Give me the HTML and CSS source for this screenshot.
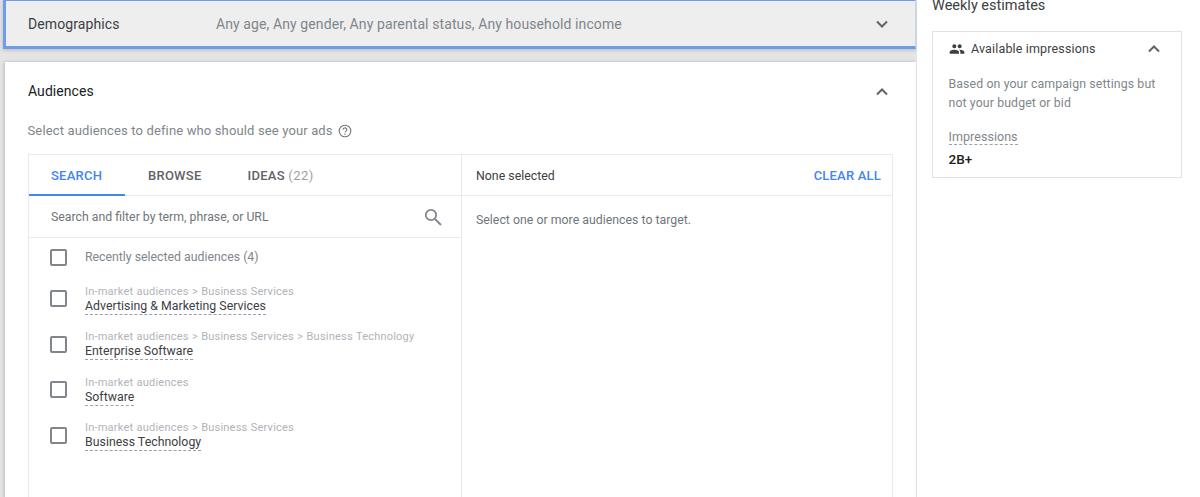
FILE: index.html
```html
<!DOCTYPE html>
<html lang="en">
<head>
<meta charset="utf-8">
<title>Audiences</title>
<link rel="stylesheet" href="styles.css">
</head>
<body>
<div class="page">
  <main class="main">
    <section class="demo">
      <span class="demo-title">Demographics</span>
      <span class="demo-value">Any age, Any gender, Any parental status, Any household income</span>
      <svg class="chev" viewBox="0 0 24 24"><path d="M6 9l6 6 6-6"/></svg>
    </section>
    <section class="card">
      <div class="card-head">
        <h2 class="card-title">Audiences</h2>
        <svg class="chev" viewBox="0 0 24 24"><path d="M6 15l6-6 6 6"/></svg>
      </div>
      <p class="lede">Select audiences to define who should see your ads
        <svg class="help" viewBox="0 0 14 14"><circle cx="7" cy="7" r="5.8"/><path d="M5.2 5.7a1.8 1.8 0 1 1 2.9 1.4c-.7.5-1.1.8-1.1 1.5"/><circle class="dot" cx="7" cy="10.3" r=".7"/></svg>
      </p>
      <div class="picker">
        <div class="col-left">
          <div class="tabs">
            <span class="tab tab-active">SEARCH</span>
            <span class="tab">BROWSE</span>
            <span class="tab">IDEAS <span class="count">(22)</span></span>
          </div>
          <div class="search">
            <span class="search-text">Search and filter by term, phrase, or URL</span>
            <svg class="search-icon" viewBox="0 0 18 18"><circle cx="7" cy="7" r="5.2"/><path d="M11 11l6 6"/></svg>
          </div>
          <ul class="list">
            <li class="row row-single"><span class="check"></span><span class="recent">Recently selected audiences (4)</span></li>
            <li class="row"><span class="check"></span><div class="item"><span class="crumb">In-market audiences &gt; Business Services</span><span class="name">Advertising &amp; Marketing Services</span></div></li>
            <li class="row"><span class="check"></span><div class="item"><span class="crumb">In-market audiences &gt; Business Services &gt; Business Technology</span><span class="name">Enterprise Software</span></div></li>
            <li class="row"><span class="check"></span><div class="item"><span class="crumb">In-market audiences</span><span class="name">Software</span></div></li>
            <li class="row"><span class="check"></span><div class="item"><span class="crumb">In-market audiences &gt; Business Services</span><span class="name">Business Technology</span></div></li>
          </ul>
        </div>
        <div class="col-right">
          <div class="sel-head">
            <span class="none">None selected</span>
            <span class="clear">CLEAR ALL</span>
          </div>
          <p class="hint">Select one or more audiences to target.</p>
        </div>
      </div>
    </section>
  </main>
  <aside class="side">
    <div class="side-title">Weekly estimates</div>
    <div class="est">
      <div class="est-head">
        <svg class="people" viewBox="0 0 24 24"><path d="M16 11c1.66 0 2.99-1.34 2.99-3S17.66 5 16 5s-3 1.34-3 3 1.34 3 3 3zm-8 0c1.66 0 2.99-1.34 2.99-3S9.66 5 8 5 5 6.34 5 8s1.34 3 3 3zm0 2c-2.33 0-7 1.17-7 3.5V19h14v-2.5C15 14.17 10.33 13 8 13zm8 0c-.29 0-.62.02-.97.05 1.16.84 1.97 1.97 1.97 3.45V19h6v-2.5c0-2.33-4.67-3.5-7-3.5z"/></svg>
        <span class="est-title">Available impressions</span>
        <svg class="chev" viewBox="0 0 24 24"><path d="M6 15l6-6 6 6"/></svg>
      </div>
      <p class="est-text">Based on your campaign settings but not your budget or bid</p>
      <span class="est-label">Impressions</span>
      <div class="est-value">2B+</div>
    </div>
  </aside>
</div>
</body>
</html>
```
FILE: styles.css
```css
* { box-sizing: border-box; }
html, body { margin: 0; height: 100%; overflow: hidden; }
body { font-family: Roboto, "Liberation Sans", sans-serif; background: #fff; color: #3c4043; }
.page { display: flex; height: 497px; }
.main { width: 917px; flex: none; background: #e4e4e4; padding-left: 3px; border-right: 1px solid #e4e6e8; }
.demo { height: 50px; margin-top: -1px; background: #eeeeee; border: 2px solid #6d9eeb; border-left-width: 3px; border-bottom-width: 3px; border-right-width: 1px; border-right-color: #c9d6ee; display: flex; align-items: center; padding: 0 23px 0 22px; box-shadow: 0 1px 4px rgba(0,0,0,.2); }
.demo-title { width: 188px; font-size: 14px; letter-spacing: .1px; color: #3c4043; }
.demo-value { flex: 1; font-size: 14px; color: #80868b; letter-spacing: .1px; }
.chev { width: 20px; height: 20px; fill: none; stroke: #5f6368; stroke-width: 2.4; flex: none; }
.card { margin: 13px 0 0 2px; height: 436px; background: #fff; padding: 0 23px 0 22px; box-shadow: -1px 0 3px rgba(0,0,0,.2); }
.card-head { height: 59px; display: flex; align-items: center; justify-content: space-between; padding-left: 1px; }
.card-head .chev { margin-right: 1px; }
.card-title { margin: -1px 0 0; font-size: 14px; font-weight: 400; letter-spacing: .05px; color: #202124; }
.lede { margin: 0; height: 33px; padding: 1px 0 0 .5px; font-size: 13px; color: #80868b; display: flex; align-items: flex-start; gap: 5px; letter-spacing: .14px; line-height: 18px; }
.help { width: 14px; height: 14px; margin-top: 2px; fill: none; stroke: #70757a; stroke-width: 1.1; }
.help .dot { fill: #70757a; stroke: none; }
.picker { display: flex; height: 344px; margin-left: 1px; border: 1px solid #e8eaed; border-bottom: 0; }
.col-left { width: 433px; flex: none; border-right: 1px solid #e8eaed; }
.col-right { flex: 1; }
.tabs { height: 41px; display: flex; border-bottom: 1px solid #e8eaed; }
.tab { height: 41px; padding-top: 13px; font-size: 13px; font-weight: 500; color: #5f6368; letter-spacing: .25px; white-space: nowrap; line-height: 15px; margin-left: 23px; }
.tab:first-child { margin-left: 0; width: 96px; padding-left: 22px; }
.tab + .tab + .tab { margin-left: 46px; }
.tab-active { color: #4285f4; border-bottom: 2px solid #4285f4; }
.count { font-weight: 400; color: #9aa0a6; letter-spacing: .5px; }
.search { height: 42px; display: flex; align-items: center; justify-content: space-between; padding: 0 19px 0 22px; border-bottom: 1px solid #e8eaed; }
.search-text { font-size: 12.3px; color: #70757a; }
.search-icon { width: 18px; height: 18px; fill: none; stroke: #80868b; stroke-width: 1.8; }
.list { list-style: none; margin: 0; padding-left: 21px; }
.row { display: flex; align-items: center; height: 45.5px; }
.row-single { height: 38px; }
.row .item { padding-top: 2px; }
.check { width: 17px; height: 17px; flex: none; border: 2px solid #80868b; border-radius: 2px; margin-right: 18px; }
.item { display: flex; flex-direction: column; align-items: flex-start; }
.crumb { font-size: 11px; line-height: 14px; color: #b0b3b8; letter-spacing: .21px; word-spacing: .4px; white-space: nowrap; }
.name { font-size: 12.3px; line-height: 14px; letter-spacing: .03px; color: #3c4043; border-bottom: 1px dashed #9aa0a6; padding-bottom: 1px; }
.recent { font-size: 12.3px; color: #80868b; }
.sel-head { height: 41px; display: flex; align-items: center; justify-content: space-between; padding: 1px 11px 0 14px; border-bottom: 1px solid #e8eaed; }
.none { font-size: 12.3px; letter-spacing: .03px; color: #3c4043; }
.clear { font-size: 13px; font-weight: 500; color: #4285f4; letter-spacing: .2px; }
.hint { margin: 17px 0 0 14px; font-size: 12.3px; line-height: 15px; color: #70757a; letter-spacing: .02px; }
.side { flex: 1; padding-left: 15px; background: #fff; }
.side-title { height: 31px; font-size: 14.5px; line-height: 12px; color: #3c4043; }
.est { width: 250px; height: 147px; border: 1px solid #e0e2e4; padding: 0 16px 0 15.5px; }
.est-head { height: 33px; display: flex; align-items: center; }
.people { width: 16px; height: 16px; fill: #3c4043; flex: none; margin-right: 6.5px; }
.est-title { flex: 1; font-size: 12.5px; color: #3c4043; letter-spacing: .15px; }
.est-head .chev { margin-right: 1px; }
.est-text { margin: 10px 0 0; font-size: 12.3px; line-height: 19px; color: #80868b; letter-spacing: .12px; width: 215px; }
.est-label { display: inline-block; margin-top: 17px; font-size: 12.5px; letter-spacing: .05px; line-height: 14px; color: #80868b; border-bottom: 1px dashed #9aa0a6; }
.est-value { margin-top: 7px; font-size: 13.5px; font-weight: 500; line-height: 15px; color: #202124; }
```
